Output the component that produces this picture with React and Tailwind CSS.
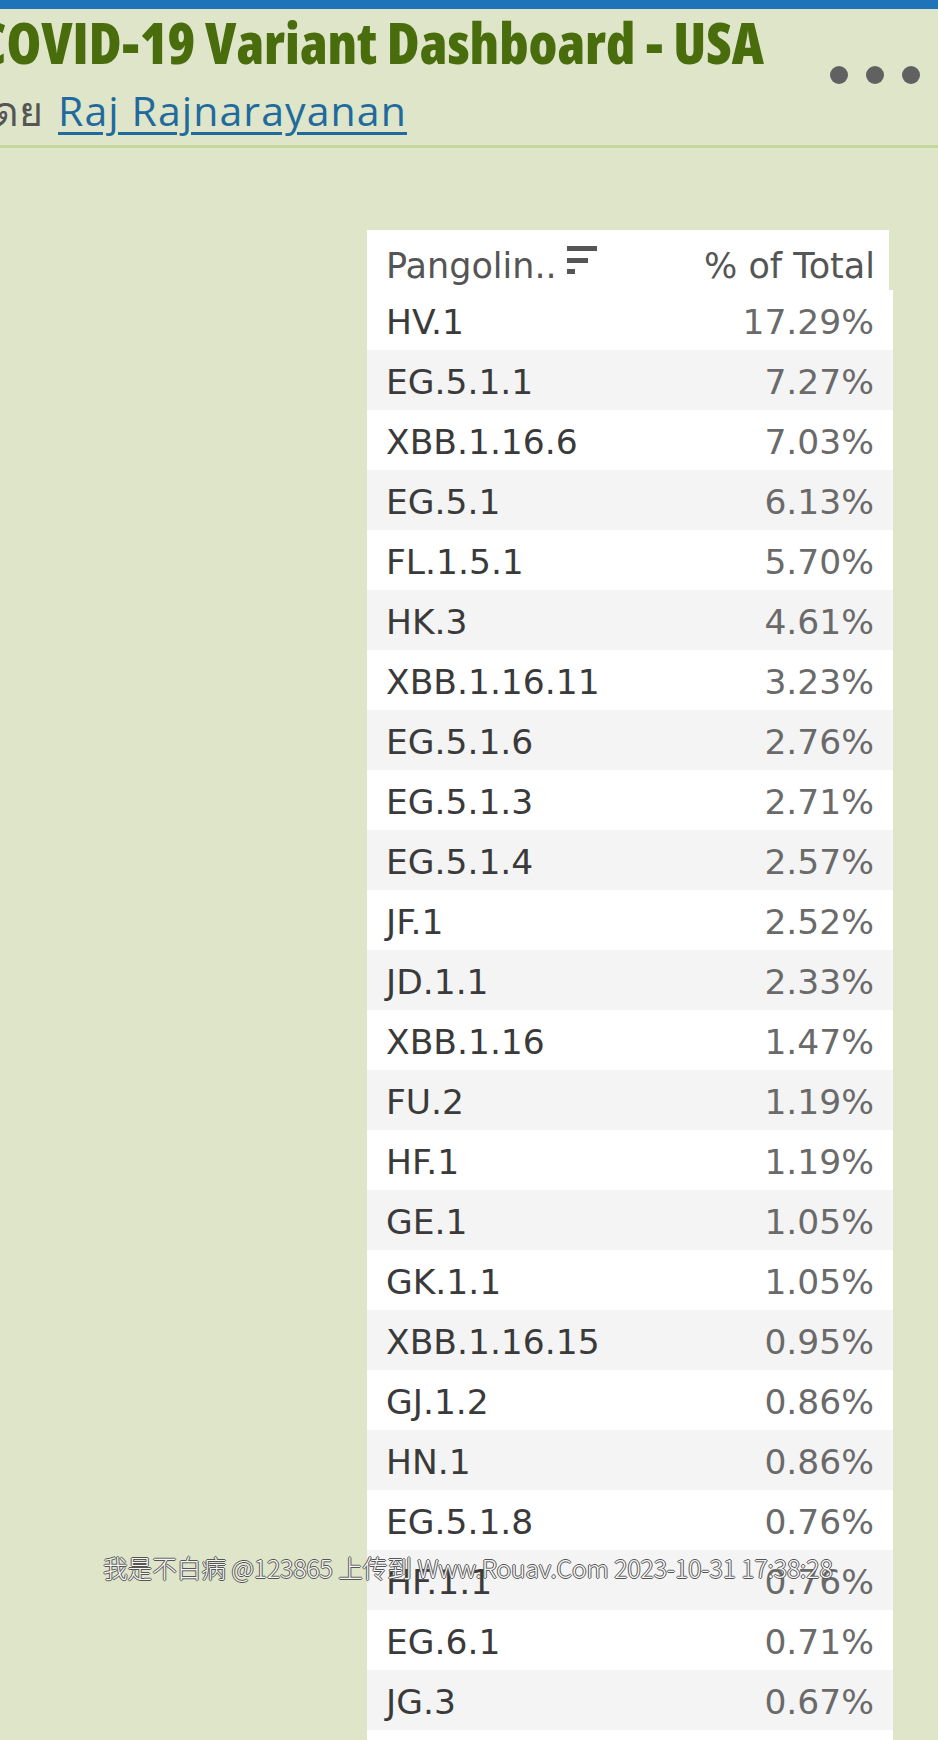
import React from 'react'

const rows = [
  ['HV.1', '17.29%'],
  ['EG.5.1.1', '7.27%'],
  ['XBB.1.16.6', '7.03%'],
  ['EG.5.1', '6.13%'],
  ['FL.1.5.1', '5.70%'],
  ['HK.3', '4.61%'],
  ['XBB.1.16.11', '3.23%'],
  ['EG.5.1.6', '2.76%'],
  ['EG.5.1.3', '2.71%'],
  ['EG.5.1.4', '2.57%'],
  ['JF.1', '2.52%'],
  ['JD.1.1', '2.33%'],
  ['XBB.1.16', '1.47%'],
  ['FU.2', '1.19%'],
  ['HF.1', '1.19%'],
  ['GE.1', '1.05%'],
  ['GK.1.1', '1.05%'],
  ['XBB.1.16.15', '0.95%'],
  ['GJ.1.2', '0.86%'],
  ['HN.1', '0.86%'],
  ['EG.5.1.8', '0.76%'],
  ['HF.1.1', '0.76%'],
  ['EG.6.1', '0.71%'],
  ['JG.3', '0.67%'],
  ['', ''],
]

function SortIcon() {
  return (
    <svg width="30" height="28" viewBox="0 0 30 28" className="mb-[12px] ml-[10px] shrink-0">
      <rect x="0" y="0" width="30" height="5" fill="#555" />
      <rect x="0" y="12" width="21" height="5" fill="#555" />
      <rect x="0" y="23" width="8" height="5" fill="#555" />
    </svg>
  )
}

export default function App() {
  return (
    <div className="relative h-[1740px] overflow-hidden bg-[#dfe5c8]">
      <div className="h-[9px] bg-[#1f73b8]" />

      {/* header */}
      <div className="flex h-[139px] items-start justify-between border-b-[3px] border-[#c4d89c]">
        <div className="-ml-[22px] min-w-0 pt-[1px]">
          <h1 className="whitespace-nowrap font-['Open_Sans',sans-serif] text-[56px] font-extrabold leading-[64px] text-[#496d0c] [font-stretch:75%]">
            COVID-19 Variant Dashboard - USA
          </h1>
          <div className="mt-[12px] flex items-baseline whitespace-nowrap font-['Open_Sans',sans-serif] text-[41px] font-medium leading-[48px] tracking-[1.1px]">
            <span className="-ml-[8px] tracking-normal text-[#555]">โดย</span>
            <a href="#" className="ml-[15px] text-[#206a9e] underline decoration-[3px] underline-offset-[6px]">
              Raj Rajnarayanan
            </a>
          </div>
        </div>
        <div className="mr-[18px] mt-[57px] flex shrink-0 gap-[18px]">
          <span className="h-[18px] w-[18px] rounded-full bg-[#616161]" />
          <span className="h-[18px] w-[18px] rounded-full bg-[#616161]" />
          <span className="h-[18px] w-[18px] rounded-full bg-[#616161]" />
        </div>
      </div>

      {/* table */}
      <div className="ml-[367px] mt-[82px] font-['DejaVu_Sans',sans-serif] text-[34.5px]">
        <div className="flex h-[60px] w-[522px] items-center justify-between bg-white pl-[19px] pr-[14px] pt-[12px] text-[35px] text-[#555]">
          <div className="flex items-center">
            <span>Pangolin..</span>
            <SortIcon />
          </div>
          <span>% of Total</span>
        </div>
        {rows.map((r, i) => (
          <div
            key={i}
            className={`flex h-[60px] w-[526px] items-center justify-between pl-[19px] pr-[19px] pt-[5px] ${i % 2 === 0 ? 'bg-white' : 'bg-[#f4f4f4]'}`}
          >
            <span className="text-[#3a3a3a]">{r[0]}</span>
            <span className="text-[#6a6a6a]">{r[1]}</span>
          </div>
        ))}
      </div>

      {/* watermark */}
      <div className="absolute left-[103px] top-[1552px] whitespace-nowrap font-['Noto_Sans_CJK_SC',sans-serif] text-[24.6px] font-light leading-[30px] text-[#f6f6f6] [text-shadow:1px_0_0_#555,-1px_0_0_#555,0_1px_0_#555,0_-1px_0_#555]">
        我是不白病 @123865 上传到 Www.Rouav.Com 2023-10-31 17:38:28
      </div>
    </div>
  )
}
